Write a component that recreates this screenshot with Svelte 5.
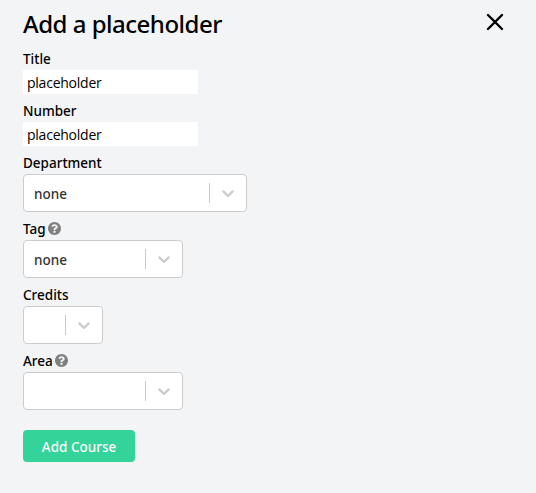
<script>
  let title = $state('placeholder');
  let number = $state('placeholder');
</script>

{#snippet help()}
  <svg class="help" viewBox="8 8 496 496" aria-hidden="true">
    <path d="M504 256c0 136.997-111.043 248-248 248S8 392.997 8 256C8 119.083 119.043 8 256 8s248 111.083 248 248zM262.655 90c-54.497 0-89.255 22.957-116.549 63.758-3.536 5.286-2.353 12.415 2.715 16.258l34.699 26.31c5.205 3.947 12.621 3.008 16.665-2.122 17.864-22.658 30.113-35.797 57.303-35.797 20.429 0 45.698 13.148 45.698 32.958 0 14.976-12.363 22.667-32.534 33.976C247.128 238.528 216 254.941 216 296v4c0 6.627 5.373 12 12 12h56c6.627 0 12-5.373 12-12v-1.333c0-28.462 83.186-29.647 83.186-106.667 0-58.002-60.165-102-116.531-102zM256 338c-25.365 0-46 20.635-46 46 0 25.364 20.635 46 46 46s46-20.636 46-46c0-25.365-20.635-46-46-46z" />
  </svg>
{/snippet}

{#snippet select(value, size)}
  <div class="select {size}">
    <span class="value">{value}</span>
    <span class="separator"></span>
    <svg class="chevron" width="20" height="20" viewBox="0 0 20 20" aria-hidden="true">
      <path d="M4.516 7.548c0.436-0.446 1.043-0.481 1.576 0l3.908 3.747 3.908-3.747c0.533-0.481 1.141-0.446 1.574 0 0.436 0.445 0.408 1.197 0 1.615-0.406 0.418-4.695 4.502-4.695 4.502-0.217 0.223-0.502 0.335-0.787 0.335s-0.57-0.112-0.789-0.335c0 0-4.287-4.084-4.695-4.502s-0.436-1.17 0-1.615z" />
    </svg>
  </div>
{/snippet}

<div class="modal">
  <header>
    <h1>Add a placeholder</h1>
    <button class="close" aria-label="Close">
      <svg width="24" height="24" viewBox="0 0 24 24" aria-hidden="true">
        <path d="M5 5l14 14M19 5L5 19" />
      </svg>
    </button>
  </header>

  <form>
    <div class="field">
      <label for="title">Title</label>
      <input id="title" type="text" bind:value={title} />
    </div>
    <div class="field">
      <label for="number">Number</label>
      <input id="number" type="text" bind:value={number} />
    </div>
    <div class="field">
      <div class="label"><span>Department</span></div>
      {@render select('none', 'large')}
    </div>
    <div class="field">
      <div class="label"><span class="short">Tag</span>{@render help()}</div>
      {@render select('none', 'medium')}
    </div>
    <div class="field">
      <div class="label"><span>Credits</span></div>
      {@render select('', 'small')}
    </div>
    <div class="field">
      <div class="label"><span class="short">Area</span>{@render help()}</div>
      {@render select('', 'medium')}
    </div>
    <button type="button" class="submit">Add Course</button>
  </form>
</div>

<style>
  :global(body) {
    background: #f3f4f6;
  }
  .modal {
    box-sizing: border-box;
    min-height: 493px;
    padding: 8px 23px 0;
    background: #f3f4f6;
    color: #000;
    font: 500 13.5px/20px 'Noto Sans', 'Open Sans', sans-serif;
  }
  header {
    display: flex;
    justify-content: space-between;
    height: 32px;
  }
  h1 {
    margin: 0;
    font-size: 24px;
    line-height: 32px;
    font-weight: 500;
    letter-spacing: -0.5px;
    white-space: nowrap;
  }
  .close {
    width: 24px;
    height: 24px;
    margin: 2px 6px 0 0;
    padding: 0;
    border: 0;
    background: none;
  }
  .close svg {
    display: block;
    fill: none;
    stroke: #000;
    stroke-width: 2.4;
    stroke-linecap: round;
  }
  form {
    display: flex;
    flex-direction: column;
    align-items: flex-start;
    gap: 7px;
    padding-top: 9px;
  }
  .field {
    display: flex;
    flex-direction: column;
    gap: 1px;
  }
  label,
  .label {
    display: flex;
    align-items: center;
    height: 20px;
  }
  .help {
    width: 13px;
    height: 13px;
    margin: 0 0 2px 2px;
    fill: #808080;
  }
  input {
    box-sizing: border-box;
    width: 175px;
    height: 24px;
    padding: 1px 4px;
    border: 0;
    background: #fff;
    color: #000;
    font: 400 14px/20px 'Open Sans', 'Noto Sans', sans-serif;
    letter-spacing: -0.24px;
  }
  .select {
    box-sizing: border-box;
    display: flex;
    align-items: center;
    height: 38px;
    border: 1px solid #ccc;
    border-radius: 4px;
    background: #fff;
    color: #333;
  }
  .large {
    width: 224px;
  }
  .medium {
    width: 160px;
  }
  .small {
    width: 80px;
  }
  .value {
    flex: 1;
    padding: 2px 0 0 10px;
  }
  .separator {
    width: 1px;
    height: 20px;
    background: #ccc;
  }
  .chevron {
    margin: 0 8px;
    fill: #ccc;
  }
  .submit {
    width: 112px;
    height: 32px;
    margin-top: 13px;
    padding: 2px 0 0;
    border: 0;
    border-radius: 4px;
    background: #34d399;
    color: #fff;
    font: 500 13.5px/20px 'Noto Sans', 'Open Sans', sans-serif;
  }
</style>
